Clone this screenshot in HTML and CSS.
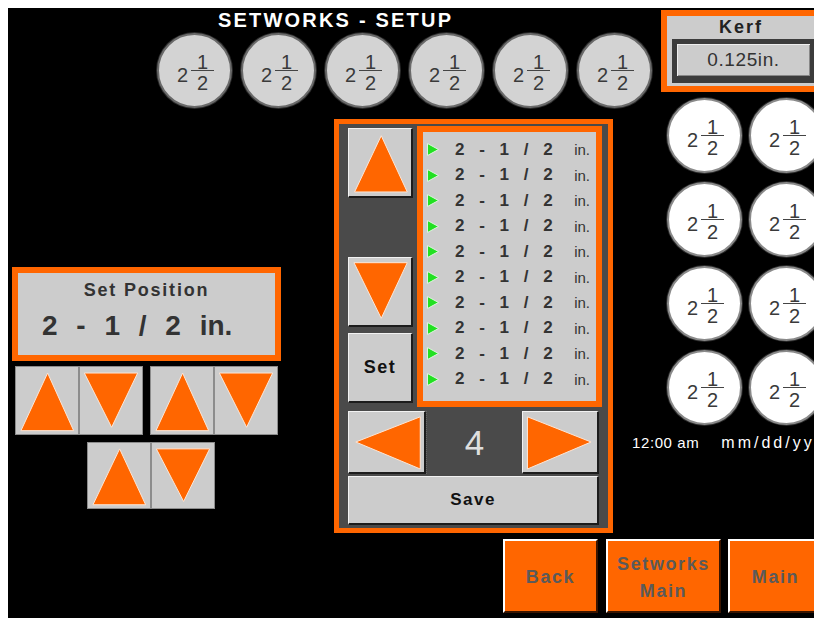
FILE: index.html
```html
<!DOCTYPE html>
<html>
<head>
	<title>Setworks - Setup</title>
	<meta charset="utf-8" />
	<link rel="stylesheet" href="styles.css">
</head>
<body>
	<div class="screen">
		<div class="upper">
			<div class="main">
				<div class="title">SETWORKS - SETUP</div>
				<div class="dial-row">
					<div class="dial"><span class="whole">2</span><span class="frac"><span class="num">1</span><span class="den">2</span></span></div>
					<div class="dial"><span class="whole">2</span><span class="frac"><span class="num">1</span><span class="den">2</span></span></div>
					<div class="dial"><span class="whole">2</span><span class="frac"><span class="num">1</span><span class="den">2</span></span></div>
					<div class="dial"><span class="whole">2</span><span class="frac"><span class="num">1</span><span class="den">2</span></span></div>
					<div class="dial"><span class="whole">2</span><span class="frac"><span class="num">1</span><span class="den">2</span></span></div>
					<div class="dial"><span class="whole">2</span><span class="frac"><span class="num">1</span><span class="den">2</span></span></div>
				</div>
				<div class="middle">
					<div class="position">
						<div class="position-box">
							<div class="position-label">Set Position</div>
							<div class="position-value">2 - 1 / 2 in.</div>
						</div>
						<div class="jog-row">
							<div class="jog-pair">
								<div class="jog"><svg viewBox="0 0 100 100" preserveAspectRatio="none"><polygon class="tri" points="51,9 93,95 8,95" /></svg></div>
								<div class="jog"><svg viewBox="0 0 100 100" preserveAspectRatio="none"><polygon class="tri" points="7,9 93,9 51,90" /></svg></div>
							</div>
							<div class="jog-pair">
								<div class="jog"><svg viewBox="0 0 100 100" preserveAspectRatio="none"><polygon class="tri" points="51,9 93,95 8,95" /></svg></div>
								<div class="jog"><svg viewBox="0 0 100 100" preserveAspectRatio="none"><polygon class="tri" points="7,9 93,9 51,90" /></svg></div>
							</div>
						</div>
						<div class="jog-row jog-row-2">
							<div class="jog-pair">
								<div class="jog"><svg viewBox="0 0 100 100" preserveAspectRatio="none"><polygon class="tri" points="51,9 93,95 8,95" /></svg></div>
								<div class="jog"><svg viewBox="0 0 100 100" preserveAspectRatio="none"><polygon class="tri" points="7,9 93,9 51,90" /></svg></div>
							</div>
						</div>
					</div>

					<div class="panel">
						<div class="panel-top">
							<div class="panel-buttons">
								<div class="btn btn-arrow"><svg viewBox="0 0 100 100" preserveAspectRatio="none"><polygon class="tri" points="52,10 94,94 9,94" /></svg></div>
								<div class="btn btn-arrow btn-down"><svg viewBox="0 0 100 100" preserveAspectRatio="none"><polygon class="tri" points="8,7 94,7 52,90" /></svg></div>
								<div class="btn btn-set">Set</div>
							</div>
							<div class="list">
								<div class="list-inner">
									<div class="row"><svg class="marker" viewBox="0 0 12 13"><polygon points="0.5,0.5 11.5,6.5 0.5,12.5" /></svg><span class="row-value">2 - 1 / 2</span><span class="row-unit">in.</span></div>
									<div class="row"><svg class="marker" viewBox="0 0 12 13"><polygon points="0.5,0.5 11.5,6.5 0.5,12.5" /></svg><span class="row-value">2 - 1 / 2</span><span class="row-unit">in.</span></div>
									<div class="row"><svg class="marker" viewBox="0 0 12 13"><polygon points="0.5,0.5 11.5,6.5 0.5,12.5" /></svg><span class="row-value">2 - 1 / 2</span><span class="row-unit">in.</span></div>
									<div class="row"><svg class="marker" viewBox="0 0 12 13"><polygon points="0.5,0.5 11.5,6.5 0.5,12.5" /></svg><span class="row-value">2 - 1 / 2</span><span class="row-unit">in.</span></div>
									<div class="row"><svg class="marker" viewBox="0 0 12 13"><polygon points="0.5,0.5 11.5,6.5 0.5,12.5" /></svg><span class="row-value">2 - 1 / 2</span><span class="row-unit">in.</span></div>
									<div class="row"><svg class="marker" viewBox="0 0 12 13"><polygon points="0.5,0.5 11.5,6.5 0.5,12.5" /></svg><span class="row-value">2 - 1 / 2</span><span class="row-unit">in.</span></div>
									<div class="row"><svg class="marker" viewBox="0 0 12 13"><polygon points="0.5,0.5 11.5,6.5 0.5,12.5" /></svg><span class="row-value">2 - 1 / 2</span><span class="row-unit">in.</span></div>
									<div class="row"><svg class="marker" viewBox="0 0 12 13"><polygon points="0.5,0.5 11.5,6.5 0.5,12.5" /></svg><span class="row-value">2 - 1 / 2</span><span class="row-unit">in.</span></div>
									<div class="row"><svg class="marker" viewBox="0 0 12 13"><polygon points="0.5,0.5 11.5,6.5 0.5,12.5" /></svg><span class="row-value">2 - 1 / 2</span><span class="row-unit">in.</span></div>
									<div class="row"><svg class="marker" viewBox="0 0 12 13"><polygon points="0.5,0.5 11.5,6.5 0.5,12.5" /></svg><span class="row-value">2 - 1 / 2</span><span class="row-unit">in.</span></div>
								</div>
							</div>
						</div>
						<div class="pager">
							<div class="btn btn-page"><svg viewBox="0 0 100 100" preserveAspectRatio="none"><polygon class="tri" points="9,50 95,8 95,95" /></svg></div>
							<div class="page-number">4</div>
							<div class="btn btn-page btn-page-next"><svg viewBox="0 0 100 100" preserveAspectRatio="none"><polygon class="tri" points="6,8 92,50 6,95" /></svg></div>
						</div>
						<div class="btn btn-save">Save</div>
					</div>
				</div>
			</div>

			<div class="side">
				<div class="kerf">
					<div class="kerf-label">Kerf</div>
					<div class="kerf-input">0.125in.</div>
				</div>
				<div class="dial-grid">
					<div class="dial dial-white"><span class="whole">2</span><span class="frac"><span class="num">1</span><span class="den">2</span></span></div>
					<div class="dial dial-white"><span class="whole">2</span><span class="frac"><span class="num">1</span><span class="den">2</span></span></div>
					<div class="dial dial-white"><span class="whole">2</span><span class="frac"><span class="num">1</span><span class="den">2</span></span></div>
					<div class="dial dial-white"><span class="whole">2</span><span class="frac"><span class="num">1</span><span class="den">2</span></span></div>
					<div class="dial dial-white"><span class="whole">2</span><span class="frac"><span class="num">1</span><span class="den">2</span></span></div>
					<div class="dial dial-white"><span class="whole">2</span><span class="frac"><span class="num">1</span><span class="den">2</span></span></div>
					<div class="dial dial-white"><span class="whole">2</span><span class="frac"><span class="num">1</span><span class="den">2</span></span></div>
					<div class="dial dial-white"><span class="whole">2</span><span class="frac"><span class="num">1</span><span class="den">2</span></span></div>
				</div>
				<div class="clock"><span>12:00 am</span><span class="clock-date">mm/dd/yy</span></div>
			</div>
		</div>

		<div class="footer">
			<div class="nav-btn nav-back">Back</div>
			<div class="nav-btn nav-setworks">Setworks<br />Main</div>
			<div class="nav-btn nav-main">Main</div>
		</div>
	</div>
</body>
</html>
```

FILE: styles.css
```css
html, body {
	overflow: hidden;
}

body {
	margin: 8px;
	font-family: "Liberation Sans", Arial, sans-serif;
}

.screen {
	width: 830px;
	height: 614px;
	background-color: #000;
	display: flex;
	flex-direction: column;
}

.upper {
	display: flex;
}

.main {
	width: 653px;
	flex-shrink: 0;
}

.title {
	margin-top: 2px;
	padding-left: 210px;
	height: 20px;
	line-height: 20px;
	font-size: 20px;
	font-weight: bold;
	letter-spacing: 2.2px;
	color: #fff;
}

/* fraction dials */
.dial-row {
	display: flex;
	gap: 9px;
	margin-top: 3px;
	padding-left: 149px;
}

.dial {
	width: 75px;
	height: 75px;
	box-sizing: border-box;
	border-radius: 50%;
	border: 2px solid #6a6a6a;
	box-shadow: 0 0 0 1px #2a2a2a;
	background-color: #d3d3d3;
	color: #3a3a3a;
	font-size: 20px;
	display: flex;
	align-items: center;
	justify-content: center;
	padding-top: 4px;
	padding-left: 2px;
}

.dial-white {
	background-color: #fff;
	border-color: #8a8a8a;
}

.whole {
	line-height: 16px;
	margin-top: 5px;
}

.frac {
	display: inline-flex;
	flex-direction: column;
	align-items: center;
	margin-left: 3px;
	line-height: 16px;
}

.frac .num {
	padding: 0 6px 0;
	border-bottom: 1px solid #444;
	margin-bottom: 4px;
}

/* set position + jog buttons */
.middle {
	display: flex;
	align-items: flex-start;
	margin-top: 11px;
}

.position {
	width: 269px;
	margin-left: 4px;
	margin-top: 148px;
}

.position-box {
	height: 94px;
	box-sizing: border-box;
	border: 6px solid #ff6600;
	background-color: #cccccc;
	color: #333;
	font-weight: bold;
}

.position-label {
	margin-top: 6px;
	line-height: 22px;
	font-size: 18px;
	letter-spacing: 1.8px;
	text-align: center;
}

.position-value {
	margin-top: 9px;
	padding-left: 24px;
	line-height: 32px;
	font-size: 28px;
	word-spacing: 11px;
	white-space: pre;
}

.jog-row {
	display: flex;
	gap: 7px;
	margin-top: 5px;
	padding-left: 3px;
}

.jog-row-2 {
	margin-top: 7px;
	padding-left: 75px;
}

.jog-pair {
	display: flex;
}

.jog {
	width: 64px;
	height: 69px;
	box-sizing: border-box;
	border: 1px solid #8c8c8c;
	background-color: #cccccc;
}

.jog-row-2 .jog {
	height: 67px;
}

svg {
	display: block;
}

.jog svg,
.btn-arrow svg,
.btn-page svg {
	width: 100%;
	height: 100%;
}

.tri {
	fill: #ff6600;
	stroke: #fde6d6;
	stroke-width: 1;
	vector-effect: non-scaling-stroke;
}

/* center panel */
.panel {
	width: 279px;
	height: 414px;
	box-sizing: border-box;
	margin-left: 53px;
	border: 5px solid #ff6600;
	background-color: #4a4a4a;
	padding: 2px 6px 3px 9px;
}

.panel-top {
	display: flex;
	gap: 4px;
	height: 281px;
}

.panel-buttons {
	width: 65px;
	display: flex;
	flex-direction: column;
	padding: 2px 0 4px;
	box-sizing: border-box;
}

.btn {
	box-sizing: border-box;
	background-color: #cccccc;
	border-style: solid;
	border-width: 1px 2px 2px 1px;
	border-color: #f2f2f2 #1c1c1c #1c1c1c #f2f2f2;
	color: #111;
	font-weight: bold;
	display: flex;
	align-items: center;
	justify-content: center;
}

.btn-arrow {
	height: 70px;
}

.btn-down {
	margin-top: auto;
}

.btn-set {
	height: 70px;
	margin-top: 6px;
	font-size: 18px;
	letter-spacing: 1.5px;
}

.list {
	width: 185px;
	box-sizing: border-box;
	border: 6px solid #ff6600;
	background-color: #cccccc;
}

.list-inner {
	padding: 5px 0 9px;
}

.row {
	height: 25.5px;
	display: flex;
	align-items: center;
	color: #333;
}

.marker {
	width: 12px;
	height: 13px;
	margin-left: 4px;
}

.marker polygon {
	fill: #22e022;
	stroke: #dff5df;
	stroke-width: 1;
}

.row-value {
	margin-left: 16px;
	font-size: 17px;
	font-weight: bold;
	word-spacing: 10px;
	white-space: pre;
}

.row-unit {
	margin-left: auto;
	margin-right: 6px;
	font-size: 15px;
}

.pager {
	display: flex;
	width: 251px;
	height: 63px;
	margin-top: 4px;
}

.btn-page {
	width: 78px;
	height: 63px;
}

.btn-page-next {
	width: 77px;
}

.page-number {
	flex: 1;
	border-left: 1px dotted #666;
	color: #dedede;
	font-size: 35px;
	display: flex;
	align-items: center;
	justify-content: center;
}

.btn-save {
	width: 251px;
	height: 49px;
	margin-top: 2px;
	font-size: 17px;
	letter-spacing: 1.5px;
}

/* right side */
.side {
	flex: 1;
}

.kerf {
	width: 160px;
	height: 82px;
	box-sizing: border-box;
	margin-top: 2px;
	border: 6px solid #ff6600;
	background-color: #cccccc;
}

.kerf-label {
	line-height: 22px;
	font-size: 18px;
	font-weight: bold;
	letter-spacing: 2px;
	text-align: center;
	color: #222;
}

.kerf-input {
	width: 143px;
	height: 44px;
	box-sizing: border-box;
	margin: 1px 0 0 5px;
	border-style: solid;
	border-width: 5px 5px 7px 5px;
	border-color: #3c3c3c;
	box-shadow: inset 1px 1px 0 #eee, inset -1px -1px 0 #888;
	background-color: #cccccc;
	color: #333;
	font-size: 19px;
	letter-spacing: 0.6px;
	display: flex;
	align-items: center;
	justify-content: center;
}

.dial-grid {
	display: grid;
	grid-template-columns: 75px 75px;
	gap: 9px 7px;
	margin: 6px 0 0 6px;
}

.clock {
	margin: 10px 0 0 -29px;
	line-height: 16px;
	font-size: 15px;
	letter-spacing: 0.6px;
	color: #fff;
	white-space: nowrap;
}

.clock-date {
	margin-left: 22px;
	font-size: 16px;
	letter-spacing: 3px;
}

/* footer buttons */
.footer {
	display: flex;
	margin-top: 6px;
	padding-left: 495px;
}

.nav-btn {
	width: 95px;
	height: 74px;
	box-sizing: border-box;
	margin-right: 8px;
	padding-top: 3px;
	background-color: #ff6600;
	border-style: solid;
	border-width: 2px;
	border-color: #fff #3a1500 #3a1500 #fff;
	color: #5a5a5a;
	font-size: 18px;
	font-weight: bold;
	letter-spacing: 1.6px;
	line-height: 27px;
	text-align: center;
	display: flex;
	align-items: center;
	justify-content: center;
	flex-shrink: 0;
}

.nav-setworks {
	width: 115px;
	margin-right: 7px;
}
```
